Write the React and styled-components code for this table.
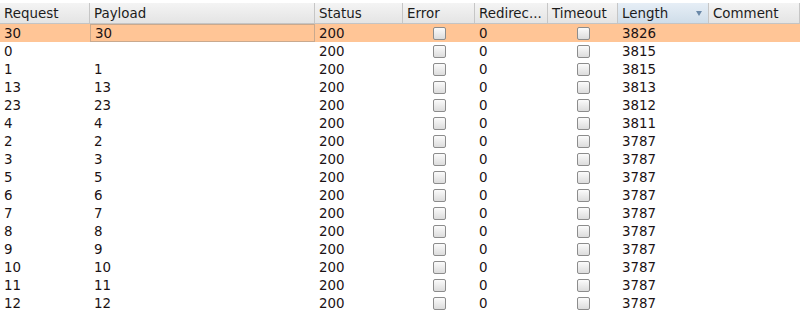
import React from 'react'
import styled, { createGlobalStyle } from 'styled-components'

const Global = createGlobalStyle`
  body {
    margin: 0;
    background: #ffffff;
    font-family: "DejaVu Sans", "Liberation Sans", sans-serif;
  }
`

const columns = [
  { key: 'request', title: 'Request', width: 90 },
  { key: 'payload', title: 'Payload', width: 225 },
  { key: 'status', title: 'Status', width: 88 },
  { key: 'error', title: 'Error', width: 72, check: true },
  { key: 'redirect', title: 'Redirec...', width: 73 },
  { key: 'timeout', title: 'Timeout', width: 70, check: true },
  { key: 'length', title: 'Length', width: 91, sorted: true },
  { key: 'comment', title: 'Comment', width: 91 },
]

const rows = [
  ['30', '30', '3826'],
  ['0', '', '3815'],
  ['1', '1', '3815'],
  ['13', '13', '3813'],
  ['23', '23', '3812'],
  ['4', '4', '3811'],
  ['2', '2', '3787'],
  ['3', '3', '3787'],
  ['5', '5', '3787'],
  ['6', '6', '3787'],
  ['7', '7', '3787'],
  ['8', '8', '3787'],
  ['9', '9', '3787'],
  ['10', '10', '3787'],
  ['11', '11', '3787'],
  ['12', '12', '3787'],
]

const template = columns.map(c => `${c.width}px`).join(' ')

const Wrap = styled.div`
  width: 800px;
  height: 313px;
  overflow: hidden;
  padding-top: 3px;
  box-sizing: border-box;
  background: #fff;
  color: #1a1a1a;
  font-size: 13.4px;
`

const Header = styled.div`
  display: grid;
  grid-template-columns: ${template};
  height: 21px;
  border-bottom: 1px solid #c4c4c4;
  box-sizing: border-box;
`

const HeadCell = styled.div`
  position: relative;
  display: flex;
  align-items: center;
  padding-left: 4px;
  padding-top: 1px;
  border-right: 1px solid #c6c6c6;
  background: ${p => p.$sorted
    ? 'linear-gradient(#e6eef6, #cfdde9)'
    : 'linear-gradient(#f4f4f4, #e4e4e4)'};
  color: #1c1c1c;
  white-space: nowrap;
  overflow: hidden;
`

const SortArrow = styled.span`
  position: absolute;
  right: 6px;
  top: 8px;
  width: 0;
  height: 0;
  border-left: 3px solid transparent;
  border-right: 3px solid transparent;
  border-top: 5px solid #6a88a8;
`

const Row = styled.div`
  display: grid;
  grid-template-columns: ${template};
  height: 18px;
  background: ${p => (p.$selected ? '#ffc596' : '#ffffff')};
`

const Cell = styled.div`
  display: flex;
  align-items: center;
  justify-content: ${p => (p.$center ? 'center' : 'flex-start')};
  padding-left: ${p => (p.$center ? '0' : '4px')};
  box-sizing: border-box;
  white-space: nowrap;
  color: #1b1214;
  border: ${p => (p.$focus ? '1px solid #c9a98e' : '0')};
`

const Box = styled.span`
  width: 11px;
  height: 11px;
  border: 1px solid #8c8c8c;
  border-radius: 2px;
  background: linear-gradient(#fbfbfb, #dcdcdc);
`

export default function App() {
  return (
    <Wrap>
      <Global />
      <Header>
        {columns.map(c => (
          <HeadCell key={c.key} $sorted={c.sorted}>
            {c.title}
            {c.sorted && <SortArrow />}
          </HeadCell>
        ))}
      </Header>
      {rows.map(([req, payload, len], i) => (
        <Row key={req} $selected={i === 0}>
          <Cell>{req}</Cell>
          <Cell $focus={i === 0}>{payload}</Cell>
          <Cell>200</Cell>
          <Cell $center><Box /></Cell>
          <Cell>0</Cell>
          <Cell $center><Box /></Cell>
          <Cell>{len}</Cell>
          <Cell />
        </Row>
      ))}
    </Wrap>
  )
}
